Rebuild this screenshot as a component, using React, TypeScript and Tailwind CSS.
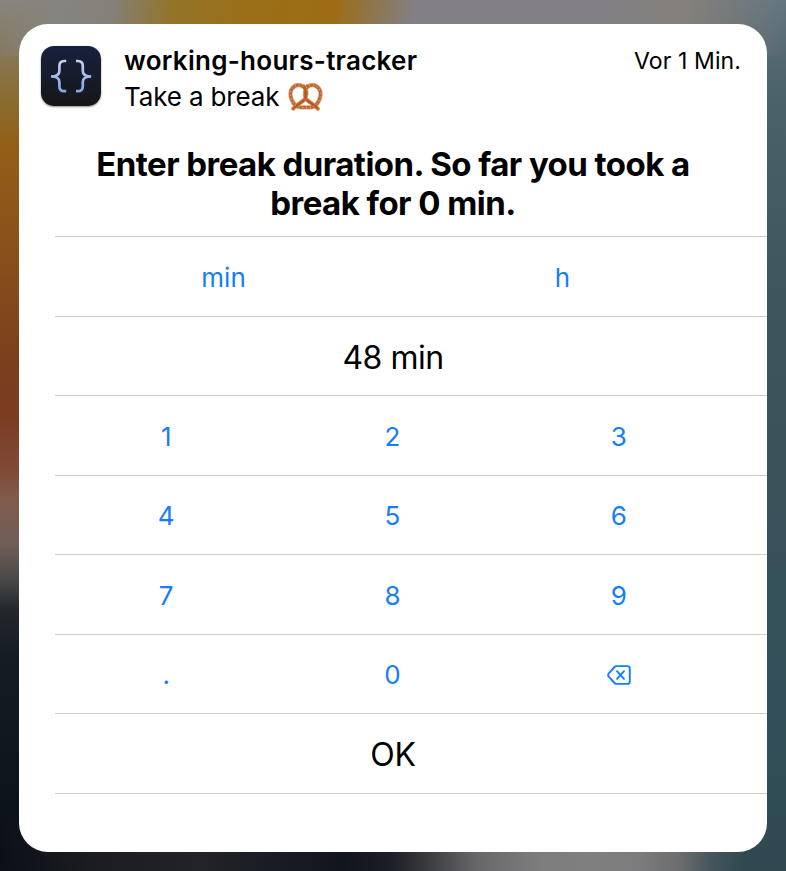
import type { ReactNode } from "react";

const keypad = [
  ["1", "2", "3"],
  ["4", "5", "6"],
  ["7", "8", "9"],
  [".", "0", "delete"],
];

function Pretzel() {
  const loop =
    "M17.5 7.2C15.5 3.3 10.5 1.9 6.7 4.2C2 7.2 1.7 12.8 3.6 17.6C5.2 21.6 8.5 25 12.5 25.4H22.5C26.5 25 29.8 21.6 31.4 17.6C33.3 12.8 33 7.2 28.3 4.2C24.5 1.9 19.5 3.3 17.5 7.2";
  const arms =
    "M15.8 4.4C18.8 7.6 18.6 13 17 17C14.5 20 9 22.3 5.2 26.6M19.2 4.4C16.6 7.6 16.4 13 18 17C20.5 20 26 22.3 29.8 26.6";
  return (
    <svg className="h-[31px] w-[36px]" viewBox="0 0 36 31" fill="none" strokeLinecap="round" role="img" aria-label="Pretzel">
      <g stroke="#e0a577" strokeWidth="4.4">
        <path d={loop} />
        <path d={arms} />
      </g>
      <g stroke="#bd6530" strokeWidth="2.8">
        <path d={loop} />
        <path d={arms} />
      </g>
      <path d={loop} stroke="#f0c9a2" strokeWidth="1" strokeDasharray="0.2 3.6" />
      <path d="M15.8 4.8C18 7.6 18.2 12 17.2 15.5M15.5 18.7L6.5 25.4M19.5 18.7L28.5 25.4" stroke="#9c4a20" strokeWidth="0.8" />
    </svg>
  );
}

function AppIcon() {
  return (
    <div className="flex size-[60px] items-center justify-center rounded-[13px] bg-linear-to-b from-[#17213f] to-[#161617] shadow-[0_1px_2px_rgba(0,0,0,0.45)]">
      <svg className="size-[60px]" viewBox="0 0 60 60" fill="none">
        <defs>
          <linearGradient id="brace" x1="0" y1="13" x2="0" y2="47" gradientUnits="userSpaceOnUse">
            <stop stopColor="#c9d2f2" />
            <stop offset="1" stopColor="#7fa5e6" />
          </linearGradient>
        </defs>
        <g stroke="url(#brace)" strokeWidth="2.7">
          <path d="M25.2 15H23.4C19.9 15 18.4 16.6 18.4 20V25C18.4 28.5 15.9 30.5 10 30.5C15.9 30.5 18.4 32.5 18.4 36V40.5C18.4 43.9 19.9 45.2 23.4 45.2H25.2" />
          <path d="M35 15H36.8C40.3 15 41.8 16.6 41.8 20V25C41.8 28.5 44.3 30.5 50.2 30.5C44.3 30.5 41.8 32.5 41.8 36V40.5C41.8 43.9 40.3 45.2 36.8 45.2H35" />
        </g>
      </svg>
    </div>
  );
}

function DeleteIcon() {
  return (
    <svg className="h-5 w-6" viewBox="0 0 24 20" fill="none" stroke="currentColor" strokeWidth="1.9" strokeLinecap="round" strokeLinejoin="round" role="img" aria-label="Delete">
      <path d="M9.6 1.1H20.4C22 1.1 22.8 1.9 22.8 3.5V16.5C22.8 18.1 22 18.9 20.4 18.9H9.6C8.7 18.9 8.1 18.6 7.5 18L1.8 11.7C.9 10.6.9 9.4 1.8 8.3L7.5 2C8.1 1.4 8.7 1.1 9.6 1.1Z" />
      <path d="M10 6.2L17 13.8M17 6.2L10 13.8" />
    </svg>
  );
}

function Row({ children }: { children: ReactNode }) {
  return (
    <div className="ml-9 flex h-[79.5px] items-center border-t border-[#cfcfd1] pt-[3px] pr-9">{children}</div>
  );
}

export default function App() {
  return (
    <div className="h-[871px] w-[786px] bg-[linear-gradient(100deg,transparent_0,#86847e_60px,#84817a_110px,#93742a_170px,#9a6f18_240px,#9d6d14_330px,#8c7755_375px,#828084_410px,#828084_600px,#84807b_680px,transparent_786px),linear-gradient(to_right,transparent_0,#1a1c21_90px,#222329_200px,#11151d_345px,#1b1e25_390px,#38393d_425px,#67676a_476px,#7e7d7e_540px,#807f80_590px,#7c7b7d_640px,#6b6d6f_680px,#46555b_711px,transparent_745px),linear-gradient(to_bottom,#88847f_0,#86785a_50px,#8a6d30_100px,#925f18_144px,#88511a_248px,#7b3f1e_366px,#7b3c20_410px,#7f4a36_469px,#805a4c_498px,#705f58_543px,#484848_580px,#22272c_610px,#151d24_655px,#0e151c_780px,#0b0f16_871px),linear-gradient(to_bottom,#60747f_0,#52676f_60px,#496168_110px,#3c565c_300px,#38525a_500px,#33505a_700px,#2e4850_871px)] bg-[size:786px_56px,786px_48px,393px_871px,393px_871px] bg-[position:0_0,0_100%,0_0,100%_0] bg-no-repeat px-[19px] pt-6 font-['Inter','Liberation_Sans',sans-serif] text-black">
      <main className="h-[828px] overflow-hidden rounded-[29px] bg-white">
        <header className="flex h-[118px] items-start pt-[22px] pr-[26px] pl-[22px]">
          <AppIcon />
          <div className="ml-[23px] flex-1">
            <h1 className="-mt-[3px] text-[26px] leading-9 font-semibold tracking-[0.28px] whitespace-nowrap">
              working-hours-tracker
            </h1>
            <div className="flex h-9 items-center gap-[9px] text-[26px] leading-9 tracking-[-0.15px]">
              Take a break
              <Pretzel />
            </div>
          </div>
          <time className="-mt-[1px] text-[23px] leading-8 tracking-[0.1px] whitespace-nowrap">Vor 1 Min.</time>
        </header>
        <h2 className="mb-[13.1px] h-[81px] pt-[3px] text-center text-[33px] leading-[39px] font-bold tracking-[-0.55px]">
          Enter break duration. So far you took a
          <br />
          break for 0 min.
        </h2>
        <Row>
          <div className="-mr-px -ml-px grid flex-1 grid-cols-2 text-center text-[26px] tracking-[0.1px] text-[#147efb]">
            <span>min</span>
            <span>h</span>
          </div>
        </Row>
        <Row>
          <output className="flex-1 pt-px text-center text-[32px] tracking-[-0.5px]">48 min</output>
        </Row>
        {keypad.map((keys) => (
          <Row key={keys[0]}>
            <div className="-mr-px -ml-0.5 grid flex-1 grid-cols-3 pb-px text-[26px] text-[#147efb]">
              {keys.map((key) => (
                <button key={key} className="flex items-center justify-center">
                  {key === "delete" ? <DeleteIcon /> : key}
                </button>
              ))}
            </div>
          </Row>
        ))}
        <Row>
          <button className="flex-1 pt-px text-center text-[32px] tracking-[-0.3px]">OK</button>
        </Row>
        <div className="ml-9 border-t border-[#cfcfd1]" />
      </main>
    </div>
  );
}
